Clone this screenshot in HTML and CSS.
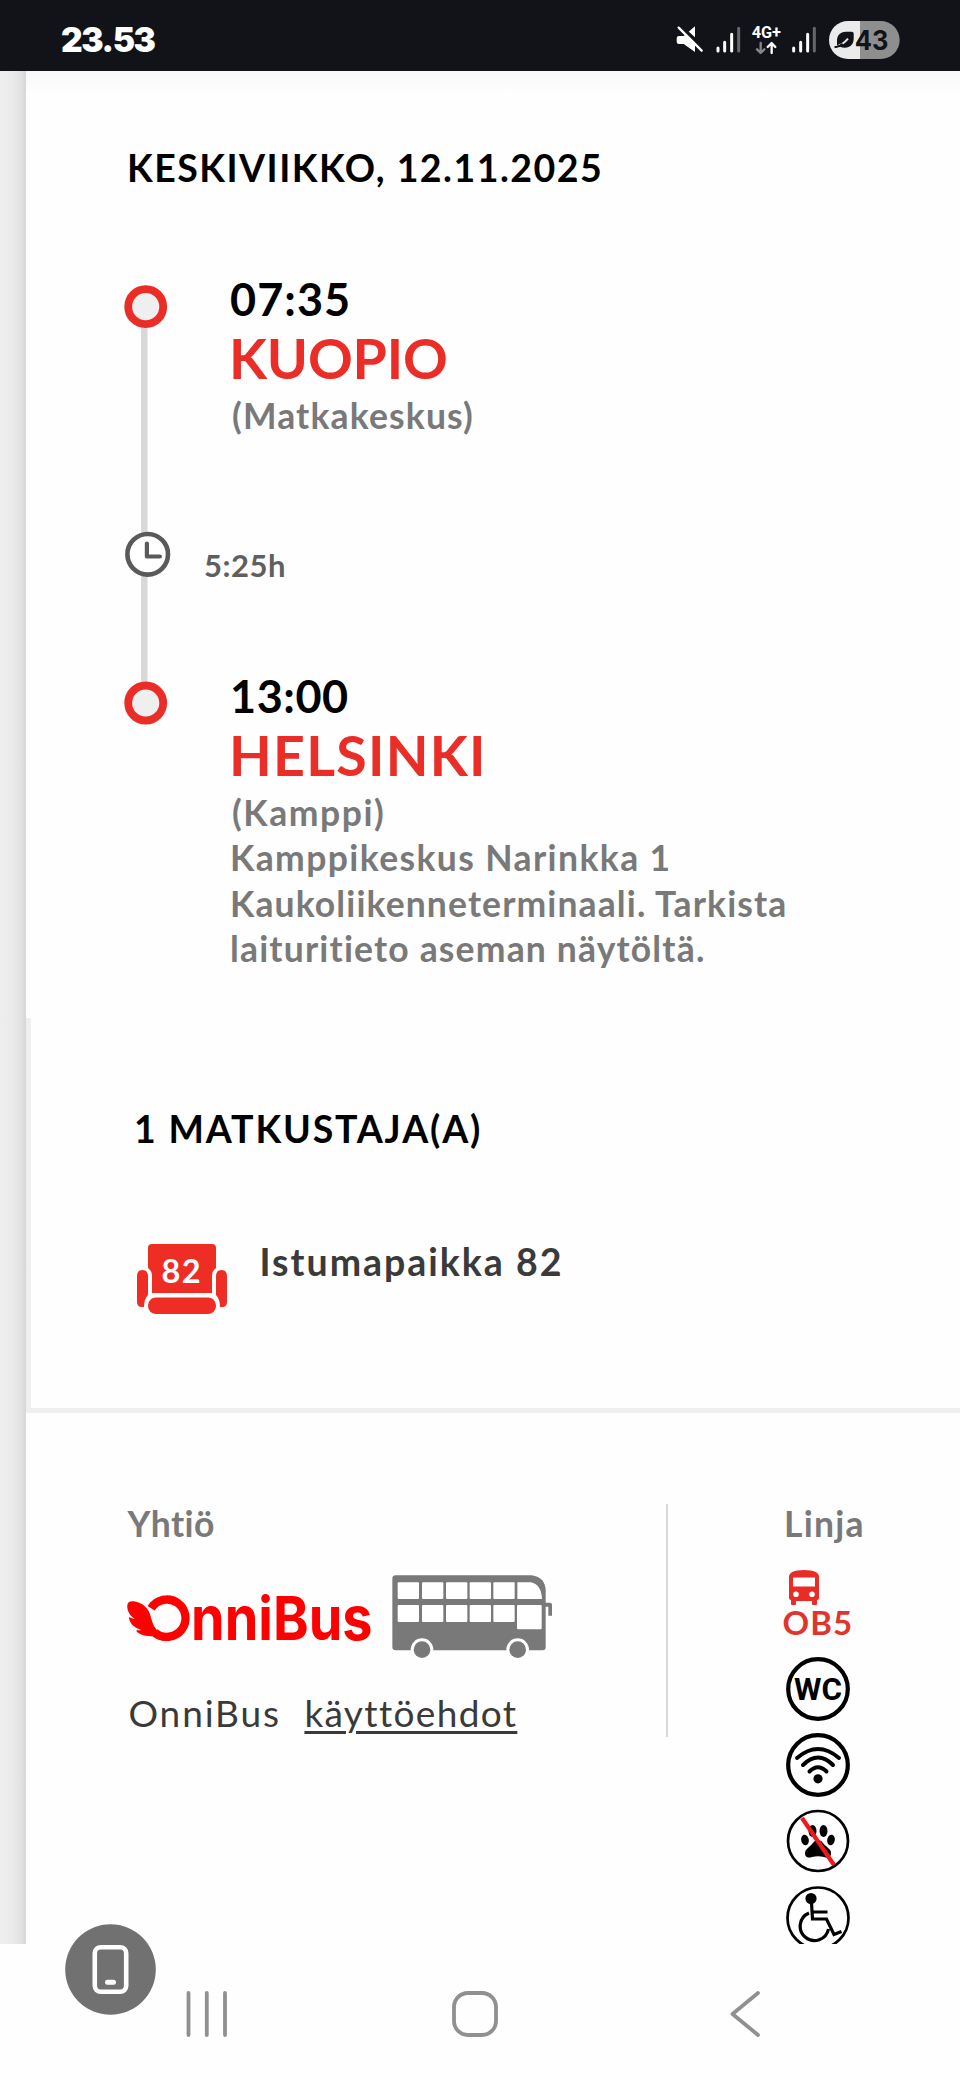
FILE: index.html
```html
<!DOCTYPE html>
<html lang="fi">
<head>
<meta charset="utf-8">
<title>OnniBus</title>
<link rel="stylesheet" href="styles.css">
</head>
<body>
<div class="screen">
  <header class="status">
    <span class="clock">23.53</span>
    <svg class="status-icons" viewBox="0 0 750 150">
      <path d="M50 70q0-7 7-7h14l34-29v77L71 87H57q-7 0-7-7z" fill="#fff"/>
      <path d="M56 30L137 105" stroke="#121318" stroke-width="12"/>
      <path d="M56 38L125 107" stroke="#fff" stroke-width="7" stroke-linecap="round"/>
      <g stroke-width="9" stroke-linecap="round" stroke="#fff">
        <path d="M174 99v9M194 82v26M215 58v50"/><path d="M236 40v68" stroke="#66676b"/>
        <path d="M401 99v9M422 82v26M443 58v50"/><path d="M463 40v68" stroke="#66676b"/>
      </g>
      <text x="275" y="70" class="net" textLength="88" lengthAdjust="spacingAndGlyphs">4G+</text>
      <g fill="none" stroke-width="7" stroke-linecap="round" stroke-linejoin="round">
        <path d="M302 84v29M291 103l11 11 11-11" stroke="#85868a"/>
        <path d="M335 114V85M323 96l12-12 11 12" stroke="#fff"/>
      </g>
      <path d="M600 18v114h-36a57 57 0 0 1 0-114z" fill="#ebebeb"/>
      <path d="M600 18h62a57 57 0 0 1 0 114h-62z" fill="#8e8e8e"/>
      <path d="M531 90V76c0-18 14-26 26-26h18c4 0 6 2 6 6v15c0 16-11 27-26 27-6 0-11-1-15-3z" fill="#121318"/>
      <path d="M536 91q12-2 28-20" fill="none" stroke="#ebebeb" stroke-width="6"/>
      <path d="M526 96q10 1 20-8" fill="none" stroke="#121318" stroke-width="6" stroke-linecap="round"/>
      <text x="584" y="105" class="battery" textLength="101" lengthAdjust="spacingAndGlyphs">43</text>
    </svg>
  </header>

  <main class="page">
    <div class="gutter"></div>
    <div class="sheet">
      <section class="journey">
        <h1 class="date">KESKIVIIKKO, 12.11.2025</h1>
        <div class="timeline">
          <svg class="rail" viewBox="0 0 50 460">
            <path d="M20.3 37v396" stroke="#d8d8d8" stroke-width="6.4"/>
            <circle cx="21.7" cy="36.7" r="17.5" fill="#efefef" stroke="#ea2e27" stroke-width="7.8"/>
            <circle cx="23.7" cy="284.3" r="20.3" fill="#fff" stroke="#5a5a5a" stroke-width="4.6"/>
            <path d="M22.9 273.5v13h13" fill="none" stroke="#5a5a5a" stroke-width="4.2" stroke-linecap="round" stroke-linejoin="round"/>
            <circle cx="21.7" cy="433" r="17.5" fill="#efefef" stroke="#ea2e27" stroke-width="7.8"/>
          </svg>
          <div class="stops">
            <div class="stop">
              <div class="time dep">07:35</div>
              <div class="city kuopio">KUOPIO</div>
              <div class="place p1">(Matkakeskus)</div>
            </div>
            <div class="duration">5:25h</div>
            <div class="stop">
              <div class="time arr">13:00</div>
              <div class="city helsinki">HELSINKI</div>
              <div class="place p2">(Kamppi)</div>
              <div class="place p3">Kamppikeskus Narinkka 1</div>
              <div class="place p4">Kaukoliikenneterminaali. Tarkista</div>
              <div class="place p5">laituritieto aseman näytöltä.</div>
            </div>
          </div>
        </div>
      </section>

      <section class="passengers">
        <h2 class="count">1 MATKUSTAJA(A)</h2>
        <div class="seat-row">
          <svg class="seat" viewBox="0 0 90 70">
            <g fill="#ee2e24">
              <path d="M11 4q0-4 4-4h60q4 0 4 4v20q-4 3-4 7v18H15V31q0-4-4-7z"/>
              <path d="M0 32q0-6 5.500-6t5.500 6v19q-4 4-4 12h-2q-5 0-5-5z"/>
              <path d="M90 32q0-6-5.500-6t-5.500 6v19q4 4 4 12h2q5 0 5-5z"/>
              <rect x="11" y="53.500" width="68" height="16.500" rx="8"/>
            </g>
            <text x="24.500" y="38.500" class="seat-no">82</text>
          </svg>
          <div class="seat-label">Istumapaikka 82</div>
        </div>
      </section>

      <section class="operator">
        <div class="company">
          <div class="label yhtio">Yhtiö</div>
          <div class="brand">
            <svg class="logo" viewBox="45 300 760 160">
              <path d="M123 352A56 56 0 1 1 134 424" fill="none" stroke="#f00" stroke-width="25"/>
              <path d="M52 341c1-8 9-11 19-10 20 3 36 14 45 30 6 12 8 25 13 38 7 16 20 29 41 38v13c-17 0-31-5-43-14-16-1-39-3-49-17 5-2 10-1 16-2-14-4-33-12-38-38 6 0 11 5 18 5-12-9-25-24-22-43z" fill="#f00"/>
              <text x="243" y="447" class="logo-text" textLength="545" lengthAdjust="spacingAndGlyphs">nniBus</text>
            </svg>
            <svg class="coach" viewBox="840 245 500 270">
              <path d="M857 255h408q42 6 42 48v168q0 9-9 9H857q-10 0-10-10V265q0-10 10-10z" fill="#797979"/>
              <path d="M1304 337h16q6 0 6 6v33h-11v-27h-11z" fill="#797979"/>
              <g fill="#fff">
                <rect x="863" y="276" width="64" height="50" rx="3"/><rect x="936" y="276" width="64" height="50" rx="3"/><rect x="1008" y="276" width="64" height="50" rx="3"/><rect x="1079" y="276" width="64" height="50" rx="3"/><rect x="1150" y="276" width="64" height="50" rx="3"/>
                <path d="M1222 276h40q32 6 34 50h-74z"/>
                <rect x="863" y="344" width="64" height="51" rx="3"/><rect x="936" y="344" width="64" height="51" rx="3"/><rect x="1008" y="344" width="64" height="51" rx="3"/><rect x="1079" y="344" width="64" height="51" rx="3"/><rect x="1150" y="344" width="64" height="51" rx="3"/>
                <rect x="1221" y="344" width="74" height="73" rx="3"/>
                <circle cx="936" cy="478" r="34"/><circle cx="1223" cy="478" r="34"/>
              </g>
              <circle cx="936" cy="478" r="25" fill="#797979"/><circle cx="1223" cy="478" r="25" fill="#797979"/>
            </svg>
          </div>
          <div class="terms"><span class="name">OnniBus</span><a class="link">käyttöehdot</a></div>
        </div>
        <div class="line">
          <div class="label linja">Linja</div>
          <svg class="bus" viewBox="0 0 30 35">
            <path d="M0 7Q0 0 15 0t15 7v21q0 2-2 2v4q0 1-1 1h-3q-1 0-1-1v-3H7v3q0 1-1 1H3q-1 0-1-1v-4q-2 0-2-2z" fill="#e92d25"/>
            <rect x="4" y="7.500" width="22" height="9" fill="#fff"/>
            <circle cx="7" cy="24.300" r="2.800" fill="#fff"/><circle cx="23" cy="24.300" r="2.800" fill="#fff"/>
          </svg>
          <div class="route">OB5</div>
          <div class="amenities">
            <svg class="amenity" viewBox="-32 -32 64 64">
              <circle r="29.800" fill="none" stroke="#000" stroke-width="4.200"/>
              <text x="-24" y="11" class="wc" textLength="48" lengthAdjust="spacingAndGlyphs">WC</text>
            </svg>
            <svg class="amenity" viewBox="-32 -32 64 64">
              <circle r="29.800" fill="none" stroke="#000" stroke-width="4.200"/>
              <g fill="none" stroke="#000" stroke-width="4" stroke-linecap="round">
                <path d="M-21-7Q0-25 21-7M-15 0Q0-15 15 0M-8.500 6.500Q0-2 8.500 6.500"/>
              </g>
              <circle cy="13.800" r="4.600"/>
            </svg>
            <svg class="amenity" viewBox="-32 -32 64 64">
              <circle r="30" fill="none" stroke="#000" stroke-width="2.700"/>
              <ellipse cx="-5.500" cy="-10" rx="4" ry="6"/><ellipse cx="5.500" cy="-10" rx="4" ry="6"/>
              <ellipse cx="-13" cy="-1" rx="3.800" ry="5.300" transform="rotate(-12 -13 -1)"/><ellipse cx="13" cy="-1" rx="3.800" ry="5.300" transform="rotate(12 13 -1)"/>
              <path d="M0-1c4 0 5 4 8 6 3 3 5 4 5 7 0 5-4 5-7 4q-6-1.500-12 0c-3 1-7 1-7-4 0-3 2-4 5-7 3-2 4-6 8-6z"/>
              <path d="M-16-23L16 24" stroke="#f31818" stroke-width="4.200"/>
            </svg>
            <svg class="amenity" viewBox="-32 -32 64 64">
              <circle r="30.500" fill="none" stroke="#000" stroke-width="2.700"/>
              <circle cx="-7" cy="-19.500" r="5.600"/>
              <g fill="none" stroke="#000" stroke-width="3.200">
                <path d="M-6.500-15L-5.500 1H8.500L16 16.500 23.500 13.500M-6-6H9.500"/>
                <path d="M-9-5A14.300 14.300 0 1 0 10.500 11"/>
              </g>
            </svg>
          </div>
        </div>
      </section>
    </div>
  </main>

  <nav class="nav">
    <svg class="recents" viewBox="0 0 42 46"><path d="M2.500 2v42M20.800 2v42M39 2v42" stroke="#909090" stroke-width="3.800" stroke-linecap="round"/></svg>
    <svg class="home" viewBox="0 0 46 46"><rect x="2" y="2" width="42" height="42" rx="14" fill="none" stroke="#909090" stroke-width="3.800"/></svg>
    <svg class="back" viewBox="0 0 31 46"><path d="M28 2L2.500 23 28 44" fill="none" stroke="#909090" stroke-width="3.800" stroke-linecap="round" stroke-linejoin="round"/></svg>
  </nav>

  <svg class="rotate" viewBox="-45.500 -45.500 91 91">
    <circle r="45.300" fill="#717171"/>
    <rect x="-15.700" y="-22.300" width="31.400" height="44.600" rx="6" fill="none" stroke="#fff" stroke-width="4.600"/>
    <path d="M-3 12.700h6" stroke="#fff" stroke-width="5" stroke-linecap="round"/>
  </svg>
</div>
</body>
</html>
```
FILE: styles.css
```css
* { box-sizing: border-box; }
body { margin: 0; background: #fefefe; font-family: Lato, "Open Sans", sans-serif; font-weight: 700; color: #000; }
svg { display: block; flex: none; overflow: visible; }
h1, h2 { margin: 0; font-weight: 700; }
.screen { position: relative; width: 960px; height: 2080px; overflow: hidden; display: flex; flex-direction: column; }

.status { height: 71px; flex: none; display: flex; align-items: flex-start; background: #121318; padding-left: 61px; }
.clock { width: 599px; font: 900 33.500px/40px Inter, sans-serif; letter-spacing: -1.400px; color: #fff; padding-top: 20px; }
.status-icons { width: 250px; height: 50px; margin-top: 15px; }
.net { font: 700 50px Roboto, sans-serif; fill: #fff; }
.battery { font: 700 80px Inter, sans-serif; fill: #121318; }

.page { height: 1873px; flex: none; display: flex; overflow: hidden; }
.gutter { width: 26px; flex: none; background: linear-gradient(90deg, #eee 0%, #ebebeb 45%, #e2e2e2 80%, #d6d6d6 100%); }
.sheet { flex: 1; min-width: 0; background: linear-gradient(#f8f8f8, #fefefe 22px); }

.journey { height: 947px; padding: 73px 0 0 98px; }
.date { margin-left: 3px; font-size: 37.500px; line-height: 48px; letter-spacing: 1.480px; white-space: nowrap; }
.timeline { display: flex; margin-top: 78px; }
.rail { width: 50px; height: 460px; }
.stops { padding: 1px 0 0 30px; white-space: nowrap; }
.stop { padding-left: 26px; }
.time { font-size: 45px; line-height: 56px; }
.dep { letter-spacing: 1.030px; }
.arr { letter-spacing: 0.530px; }
.city { font-size: 55.500px; line-height: 60px; color: #ea2e27; margin: 0.500px 0 5px -1px; }
.kuopio { letter-spacing: -0.180px; }
.helsinki { letter-spacing: 1.260px; }
.place { font-size: 35.500px; line-height: 45.500px; color: #797979; }
.p1 { letter-spacing: 1.150px; padding-left: 2px; }
.p2 { letter-spacing: 1.550px; padding-left: 2px; }
.p3 { letter-spacing: 1.390px; }
.p4 { letter-spacing: 1.110px; }
.p5 { letter-spacing: 1.170px; }
.duration { margin: 107px 0 83px; font-size: 31px; line-height: 40px; letter-spacing: 0.520px; color: #5f5f5f; }

.passengers { height: 395px; border: solid #efefef; border-width: 0 0 5px 5px; padding: 87px 0 0 103px; background: #fefefe; }
.count { font-size: 37.500px; line-height: 48px; letter-spacing: 1.840px; }
.seat-row { display: flex; margin: 84.500px 0 0 3px; }
.seat { width: 90px; height: 70px; margin-top: 6px; }
.seat-no { font: 700 32.500px Lato, sans-serif; letter-spacing: 1.500px; fill: #fff; }
.seat-label { margin-left: 32.500px; font-size: 37.500px; line-height: 48px; letter-spacing: 1.980px; color: #3a3a3a; }

.operator { display: flex; padding: 86.500px 0 0 99px; white-space: nowrap; }
.company { width: 543px; height: 237px; border-right: 2px solid #d8d8d8; border-image: linear-gradient(transparent 5px, #d8d8d8 5px) 1; }
.label { font-size: 35.500px; line-height: 46px; color: #797979; padding-top: 1px; }
.yhtio { letter-spacing: 0.360px; margin-left: 2.500px; }
.linja { letter-spacing: 1.250px; margin-left: 1px; }
.brand { display: flex; margin-top: 25px; height: 88px; }
.logo { width: 253.300px; height: 53.300px; margin-top: 19px; }
.logo-text { font: 700 182px Inter, sans-serif; fill: #f00; }
.coach { width: 166.700px; height: 90px; margin-left: 12.200px; }
.terms { margin: 30.500px 0 0 3.500px; font-size: 37px; line-height: 46px; font-weight: 400; color: #3a3a3a; }
.name { letter-spacing: 1.870px; margin-right: 23.500px; }
.link { letter-spacing: 1.350px; text-decoration: underline; text-decoration-thickness: 3px; text-underline-offset: 4px; }
.line { padding-left: 115px; }
.bus { width: 30px; height: 35px; margin: 23.500px 0 0 6px; }
.route { margin: -3px 0 0 -0.500px; font-size: 33px; line-height: 40px; letter-spacing: 1.050px; color: #e0352f; }
.amenities { display: flex; flex-direction: column; gap: 12.400px; margin: 14.500px 0 0 3px; }
.amenity { width: 64px; height: 64px; }
.wc { font: 700 31px Roboto, sans-serif; }

.nav { flex: 1; display: flex; padding: 46.500px 0 0 186px; background: #fefefe; }
.recents { width: 42px; height: 46px; }
.home { width: 46px; height: 46px; margin-left: 224px; }
.back { width: 31px; height: 46px; margin-left: 231.500px; }
.rotate { position: absolute; left: 65px; top: 1923.500px; width: 91px; height: 91px; }
```
